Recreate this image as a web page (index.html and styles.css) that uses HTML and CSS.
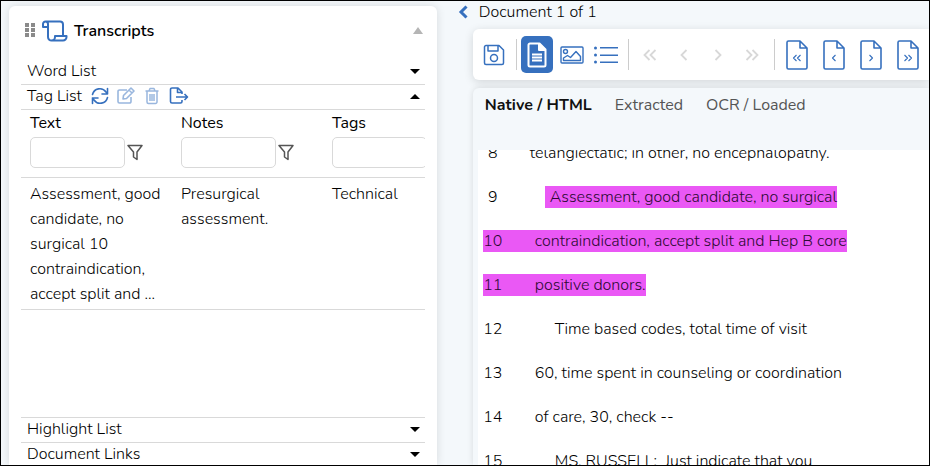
FILE: index.html
```html
<!DOCTYPE html>
<html lang="en">
<head>
    <meta charset="UTF-8">
    <meta name="viewport" content="width=device-width, initial-scale=1.0">
    <title>Transcripts</title>
    <link rel="stylesheet" href="styles.css">
</head>
<body>
    <aside class="panel">
        <header class="panel-header">
            <svg class="grip" width="11" height="15" viewBox="0 0 11 15" fill="#8a8a8a">
                <path d="M0 0h4v4H0zM6 0h4v4H6zM0 5h4v4H0zM6 5h4v4H6zM0 10h4v4H0zM6 10h4v4H6z"/>
            </svg>
            <svg class="scroll-icon" width="26" height="22" viewBox="0 0 26 22" fill="none" stroke="#3670be" stroke-width="2" stroke-linejoin="round">
                <path d="M6 7H1V4a2.500 2.500 0 0 1 2.500-2.500A2.500 2.500 0 0 1 6 4v13a3.500 3.500 0 0 0 4 3.500h11a3.500 3.500 0 0 0 3.500-3.500v-1H13v1a3.500 3.500 0 0 1-3.500 3.500M3.500 1.500H18a3 3 0 0 1 3 3V16"/>
            </svg>
            <h1>Transcripts</h1>
            <button class="collapse" aria-label="Collapse panel"><span class="caret up grey"></span></button>
        </header>

        <section class="row">
            <h2>Word List</h2>
            <button class="toggle" aria-label="Expand Word List"><span class="caret down"></span></button>
        </section>
        <section class="row">
            <h2>Tag List</h2>
            <div class="actions">
                <button aria-label="Refresh">
                    <svg width="18" height="18" viewBox="0 0 18 18" fill="none" stroke="#3670be" stroke-width="1.600" stroke-linecap="round" stroke-linejoin="round">
                        <path d="M1.500 7.500A7.500 7.500 0 0 1 15 5l1.500 2M16.500 1.500V7H11M16.500 10.500A7.500 7.500 0 0 1 3 13l-1.500-2M1.500 16.500V11H7"/>
                    </svg>
                </button>
                <button aria-label="Edit" disabled>
                    <svg width="18" height="18" viewBox="0 0 18 18" fill="none" stroke="#3670be" stroke-width="1.600" stroke-linejoin="round">
                        <path d="M10 3H2.500A1.500 1.500 0 0 0 1 4.500v10A1.500 1.500 0 0 0 2.500 16h10a1.500 1.500 0 0 0 1.500-1.500V10M6 12l.5-3.500L14 1l3 3-7.500 7.500zM12 3l3 3"/>
                    </svg>
                </button>
                <button aria-label="Delete" disabled>
                    <svg width="18" height="18" viewBox="0 0 18 18" fill="none" stroke="#3670be" stroke-width="1.500" stroke-linejoin="round">
                        <path d="M2.500 4h13M6 4l1-2.500h4L12 4M4 4v11a1.500 1.500 0 0 0 1.500 1.500h7A1.500 1.500 0 0 0 14 15V4M7 7v7M9 7v7M11 7v7"/>
                    </svg>
                </button>
                <button aria-label="Export">
                    <svg width="20" height="18" viewBox="0 0 20 18" fill="none" stroke="#3670be" stroke-width="1.600" stroke-linejoin="round">
                        <path d="M13 7V5L9 1H3a1.500 1.500 0 0 0-1.500 1.500v12A1.500 1.500 0 0 0 3 16h8.500a1.500 1.500 0 0 0 1.500-1.500V13M8.500 1v4.500H13M7 10h11.500M15.500 7l3 3-3 3"/>
                    </svg>
                </button>
            </div>
            <button class="toggle" aria-label="Collapse Tag List"><span class="caret up"></span></button>
        </section>

        <div class="table-wrap">
            <table>
                <thead>
                    <tr>
                        <th>
                            <label for="filter-text">Text</label>
                            <div class="filter">
                                <input type="text" id="filter-text">
                                <button aria-label="Filter text">
                                    <svg width="16" height="17" viewBox="0 0 16 17" fill="none" stroke="#555" stroke-width="1.500" stroke-linejoin="round"><path d="M1 1.500h14L10 8v7.500L6.500 13V8z"/></svg>
                                </button>
                            </div>
                        </th>
                        <th>
                            <label for="filter-notes">Notes</label>
                            <div class="filter">
                                <input type="text" id="filter-notes">
                                <button aria-label="Filter notes">
                                    <svg width="16" height="17" viewBox="0 0 16 17" fill="none" stroke="#555" stroke-width="1.500" stroke-linejoin="round"><path d="M1 1.500h14L10 8v7.500L6.500 13V8z"/></svg>
                                </button>
                            </div>
                        </th>
                        <th>
                            <label for="filter-tags">Tags</label>
                            <div class="filter">
                                <input type="text" id="filter-tags">
                            </div>
                        </th>
                    </tr>
                </thead>
                <tbody>
                    <tr>
                        <td>Assessment, good candidate, no surgical 10 contraindication, accept split and ...</td>
                        <td>Presurgical assessment.</td>
                        <td>Technical</td>
                    </tr>
                </tbody>
            </table>
        </div>

        <section class="row">
            <h2>Highlight List</h2>
            <button class="toggle" aria-label="Expand Highlight List"><span class="caret down"></span></button>
        </section>
        <section class="row">
            <h2>Document Links</h2>
            <button class="toggle" aria-label="Expand Document Links"><span class="caret down"></span></button>
        </section>
    </aside>

    <main class="viewer">
        <header class="viewer-header">
            <button aria-label="Back">
                <svg width="10" height="14" viewBox="0 0 10 14" fill="none" stroke="#3670be" stroke-width="3"><path d="M8.500 1.500L3 7l5.500 5.500"/></svg>
            </button>
            <span>Document 1 of 1</span>
        </header>

        <nav class="toolbar">
            <button class="tool" aria-label="Save">
                <svg width="22" height="22" viewBox="0 0 22 22" fill="none" stroke="#3670be" stroke-width="1.500" stroke-linejoin="round">
                    <path d="M3 1.500h13l4.500 4.500v13a1.500 1.500 0 0 1-1.500 1.500H3A1.500 1.500 0 0 1 1.500 19V3A1.500 1.500 0 0 1 3 1.500zM5 1.500V7h10V1.500"/>
                    <circle cx="11" cy="14" r="3.500"/>
                </svg>
            </button>
            <span class="divider"></span>
            <button class="tool active" aria-label="Document view">
                <svg width="20" height="26" viewBox="0 0 20 26" fill="none" stroke="#fff" stroke-width="2" stroke-linejoin="round">
                    <path d="M3 1.500h9.500l6 6V23a1.500 1.500 0 0 1-1.500 1.500H3A1.500 1.500 0 0 1 1.500 23V3A1.500 1.500 0 0 1 3 1.500z"/>
                    <path d="M12 2v6h6z" fill="#fff"/>
                    <path d="M5 12.500h10M5 15.500h10M5 18.500h10"/>
                </svg>
            </button>
            <button class="tool" aria-label="Image view">
                <svg width="24" height="18" viewBox="0 0 24 18" fill="none" stroke="#3670be" stroke-width="1.400" stroke-linejoin="round">
                    <rect x="1" y="1" width="22" height="16" rx="1"/>
                    <circle cx="5.500" cy="5.500" r="2"/>
                    <path d="M3.500 14.500V12l4-2.500 3 2L16 5.500l4.500 5v4z"/>
                </svg>
            </button>
            <button class="tool" aria-label="List view">
                <svg width="24" height="18" viewBox="0 0 24 18" fill="#3670be">
                    <path d="M6 1h18v1.500H6zM6 8.500h18V10H6zM6 15.500h18V17H6z"/>
                    <circle cx="1.500" cy="2" r="1.500"/><circle cx="1.500" cy="9" r="1.500"/><circle cx="1.500" cy="16" r="1.500"/>
                </svg>
            </button>
            <span class="divider"></span>
            <button class="tool" aria-label="First page" disabled>
                <svg width="14" height="12" viewBox="0 0 14 12" fill="none" stroke="#d8d8d8" stroke-width="1.800"><path d="M6.500 1l-5 5 5 5M12.500 1l-5 5 5 5"/></svg>
            </button>
            <button class="tool" aria-label="Previous page" disabled>
                <svg width="8" height="12" viewBox="0 0 8 12" fill="none" stroke="#d8d8d8" stroke-width="1.800"><path d="M6.500 1l-5 5 5 5"/></svg>
            </button>
            <button class="tool" aria-label="Next page" disabled>
                <svg width="8" height="12" viewBox="0 0 8 12" fill="none" stroke="#d8d8d8" stroke-width="1.800"><path d="M1.500 1l5 5-5 5"/></svg>
            </button>
            <button class="tool" aria-label="Last page" disabled>
                <svg width="14" height="12" viewBox="0 0 14 12" fill="none" stroke="#d8d8d8" stroke-width="1.800"><path d="M1.500 1l5 5-5 5M7.500 1l5 5-5 5"/></svg>
            </button>
            <span class="divider"></span>
            <button class="tool file" aria-label="First document">
                <svg width="22" height="30" viewBox="0 0 22 30" fill="none" stroke="#3670be" stroke-width="1.600" stroke-linejoin="round">
                    <path d="M2.500 1H14l7 7v19.500a1.500 1.500 0 0 1-1.500 1.500h-17A1.500 1.500 0 0 1 1 27.500v-25A1.500 1.500 0 0 1 2.500 1zM14 1v7h7"/>
                    <path d="M10.500 15L7.500 18l3 3M14.500 15l-3 3 3 3" stroke-width="1.100"/>
                </svg>
            </button>
            <button class="tool file" aria-label="Previous document">
                <svg width="22" height="30" viewBox="0 0 22 30" fill="none" stroke="#3670be" stroke-width="1.600" stroke-linejoin="round">
                    <path d="M2.500 1H14l7 7v19.500a1.500 1.500 0 0 1-1.500 1.500h-17A1.500 1.500 0 0 1 1 27.500v-25A1.500 1.500 0 0 1 2.500 1zM14 1v7h7"/>
                    <path d="M12.500 15l-3 3 3 3" stroke-width="1.100"/>
                </svg>
            </button>
            <button class="tool file" aria-label="Next document">
                <svg width="22" height="30" viewBox="0 0 22 30" fill="none" stroke="#3670be" stroke-width="1.600" stroke-linejoin="round">
                    <path d="M2.500 1H14l7 7v19.500a1.500 1.500 0 0 1-1.500 1.500h-17A1.500 1.500 0 0 1 1 27.500v-25A1.500 1.500 0 0 1 2.500 1zM14 1v7h7"/>
                    <path d="M9.500 15l3 3-3 3" stroke-width="1.100"/>
                </svg>
            </button>
            <button class="tool file" aria-label="Last document">
                <svg width="22" height="30" viewBox="0 0 22 30" fill="none" stroke="#3670be" stroke-width="1.600" stroke-linejoin="round">
                    <path d="M2.500 1H14l7 7v19.500a1.500 1.500 0 0 1-1.500 1.500h-17A1.500 1.500 0 0 1 1 27.500v-25A1.500 1.500 0 0 1 2.500 1zM14 1v7h7"/>
                    <path d="M7.500 15l3 3-3 3M11.500 15l3 3-3 3" stroke-width="1.100"/>
                </svg>
            </button>
        </nav>

        <section class="document">
            <div class="tabs">
                <button class="active">Native / HTML</button>
                <button>Extracted</button>
                <button>OCR / Loaded</button>
            </div>
            <div class="transcript">
                <div class="lines">
                    <p><span class="num">8</span>telangiectatic; in other, no encephalopathy.</p>
                    <p><span class="num">9</span><span class="indent-2"><mark class="pad">Assessment, good candidate, no surgical</mark></span></p>
                    <p><mark><span class="num">10</span><span class="indent-1">contraindication, accept split and Hep B core</span></mark></p>
                    <p><mark><span class="num">11</span><span class="indent-1">positive donors.</span></mark></p>
                    <p><span class="num">12</span><span class="indent-3">Time based codes, total time of visit</span></p>
                    <p><span class="num">13</span><span class="indent-1">60, time spent in counseling or coordination</span></p>
                    <p><span class="num">14</span><span class="indent-1">of care, 30, check --</span></p>
                    <p><span class="num">15</span><span class="indent-3">MS. RUSSELL:&nbsp; Just indicate that you</span></p>
                </div>
            </div>
        </section>
    </main>
</body>
</html>
```
FILE: styles.css
```css
* {
    box-sizing: border-box;
}

body {
    height: 100vh;
    margin: 0;
    padding: 5px 0 0 8px;
    display: flex;
    gap: 21px;
    overflow: hidden;
    border: 1px solid #000;
    font-family: Nunito, Lato, sans-serif;
    font-size: 16px;
    font-weight: 300;
    line-height: 24px;
    color: #000;
    background-color: #f4f8fb;
}

h1,
h2,
p {
    margin: 0;
    font-size: 16px;
}

button {
    padding: 0;
    border: none;
    font: inherit;
    color: inherit;
    background: none;
    cursor: pointer;
}

svg {
    display: block;
}

/* Left panel */
.panel {
    flex: 0 0 46.5%;
    min-width: 0;
    padding: 0 12px;
    display: flex;
    flex-direction: column;
    border-radius: 6px 6px 0 0;
    background-color: #fff;
    box-shadow: 0 0 10px rgba(0, 0, 0, 0.12);
}

.panel-header {
    height: 54px;
    flex-shrink: 0;
    padding: 0 2px 5px 4px;
    display: flex;
    align-items: center;
}

.scroll-icon {
    margin: 0 6px;
}

.collapse {
    margin-left: auto;
}

.row {
    height: 25px;
    flex-shrink: 0;
    padding: 0 5px 2px 6px;
    display: flex;
    align-items: center;
    border-bottom: 1px solid #d9d9d9;
}

.row:last-child {
    height: 22px;
    padding-bottom: 0;
    border-bottom: none;
}

h1 {
    font-weight: 600;
}

.row h2 {
    font-weight: inherit;
}

.actions {
    margin-left: 9px;
    display: flex;
    gap: 8px;
}

.actions button:disabled {
    opacity: 0.5;
}

.toggle {
    margin-left: auto;
}

.caret {
    display: block;
    border-left: 5px solid transparent;
    border-right: 5px solid transparent;
}

.caret.down {
    border-top: 5px solid #000;
}

.caret.up {
    border-bottom: 5px solid #000;
}

.caret.grey {
    border-bottom: 7px solid #b5b5b5;
}

/* Tag table */
.table-wrap {
    flex: 1;
    overflow: hidden;
    border-bottom: 1px solid #d9d9d9;
}

table {
    width: 453px;
    table-layout: fixed;
    border-collapse: collapse;
}

th,
td {
    padding: 0 9px;
    text-align: left;
    vertical-align: top;
    border-bottom: 1px solid #d9d9d9;
}

th {
    padding-bottom: 9px;
    font-weight: 400;
}

th label {
    display: block;
    margin-bottom: 1px;
    line-height: 26px;
}

td {
    padding: 4px 9px 2px;
    line-height: 25px;
}

.filter {
    display: flex;
    align-items: center;
    gap: 2px;
}

.filter input {
    width: 95px;
    height: 31px;
    padding: 0 8px;
    border: 1px solid #d9d9d9;
    border-radius: 5px;
    font: inherit;
}

/* Document viewer */
.viewer {
    flex: 1;
    min-width: 0;
    display: flex;
    flex-direction: column;
}

.viewer-header {
    height: 23px;
    flex-shrink: 0;
    padding-bottom: 11px;
    display: flex;
    align-items: center;
    gap: 11px;
}

.toolbar {
    height: 51px;
    flex-shrink: 0;
    margin-left: 15px;
    padding-left: 4px;
    display: flex;
    align-items: center;
    border-radius: 6px 0 0 6px;
    background-color: #fff;
    box-shadow: 0 2px 10px rgba(0, 0, 0, 0.14);
}

.tool {
    width: 34px;
    height: 37px;
    flex-shrink: 0;
    display: flex;
    align-items: center;
    justify-content: center;
}

.tool.active {
    width: 32px;
    margin-right: 2px;
    border-radius: 5px;
    background-color: #3670be;
}

.tool.file {
    width: 37px;
}

.tool:disabled {
    cursor: default;
}

.divider {
    width: 1px;
    height: 31px;
    flex-shrink: 0;
    margin: 0 4px 0 5px;
    background-color: #ccc;
}

.document {
    flex: 1;
    min-height: 0;
    margin: 8px 0 0 15px;
    display: flex;
    flex-direction: column;
    border-radius: 6px 0 0 0;
    background-color: #f4f8fb;
    box-shadow: 0 0 6px rgba(0, 0, 0, 0.12);
}

.tabs {
    height: 62px;
    flex-shrink: 0;
    padding: 5px 12px;
    display: flex;
    align-items: flex-start;
    gap: 23px;
    font-weight: 400;
    color: #555;
}

.tabs .active {
    font-weight: 700;
    color: #111;
}

.transcript {
    flex: 1;
    min-height: 0;
    margin-left: 5px;
    padding-left: 5px;
    overflow: hidden;
    background-color: #fff;
}

/* scrolled part way through the first line */
.lines {
    margin-top: -19px;
}

.lines p {
    line-height: 44px;
    white-space: nowrap;
}

.num {
    display: inline-block;
    width: 20px;
    margin-right: 27px;
    line-height: 22px;
    text-align: center;
}

mark {
    display: inline-block;
    line-height: 22px;
    color: #2d0a33;
    background-color: #ea58f5;
}

mark.pad {
    padding-left: 5px;
}

.indent-1 {
    padding-left: 5px;
}

.indent-2 {
    padding-left: 15px;
}

.indent-3 {
    padding-left: 25px;
}
```
